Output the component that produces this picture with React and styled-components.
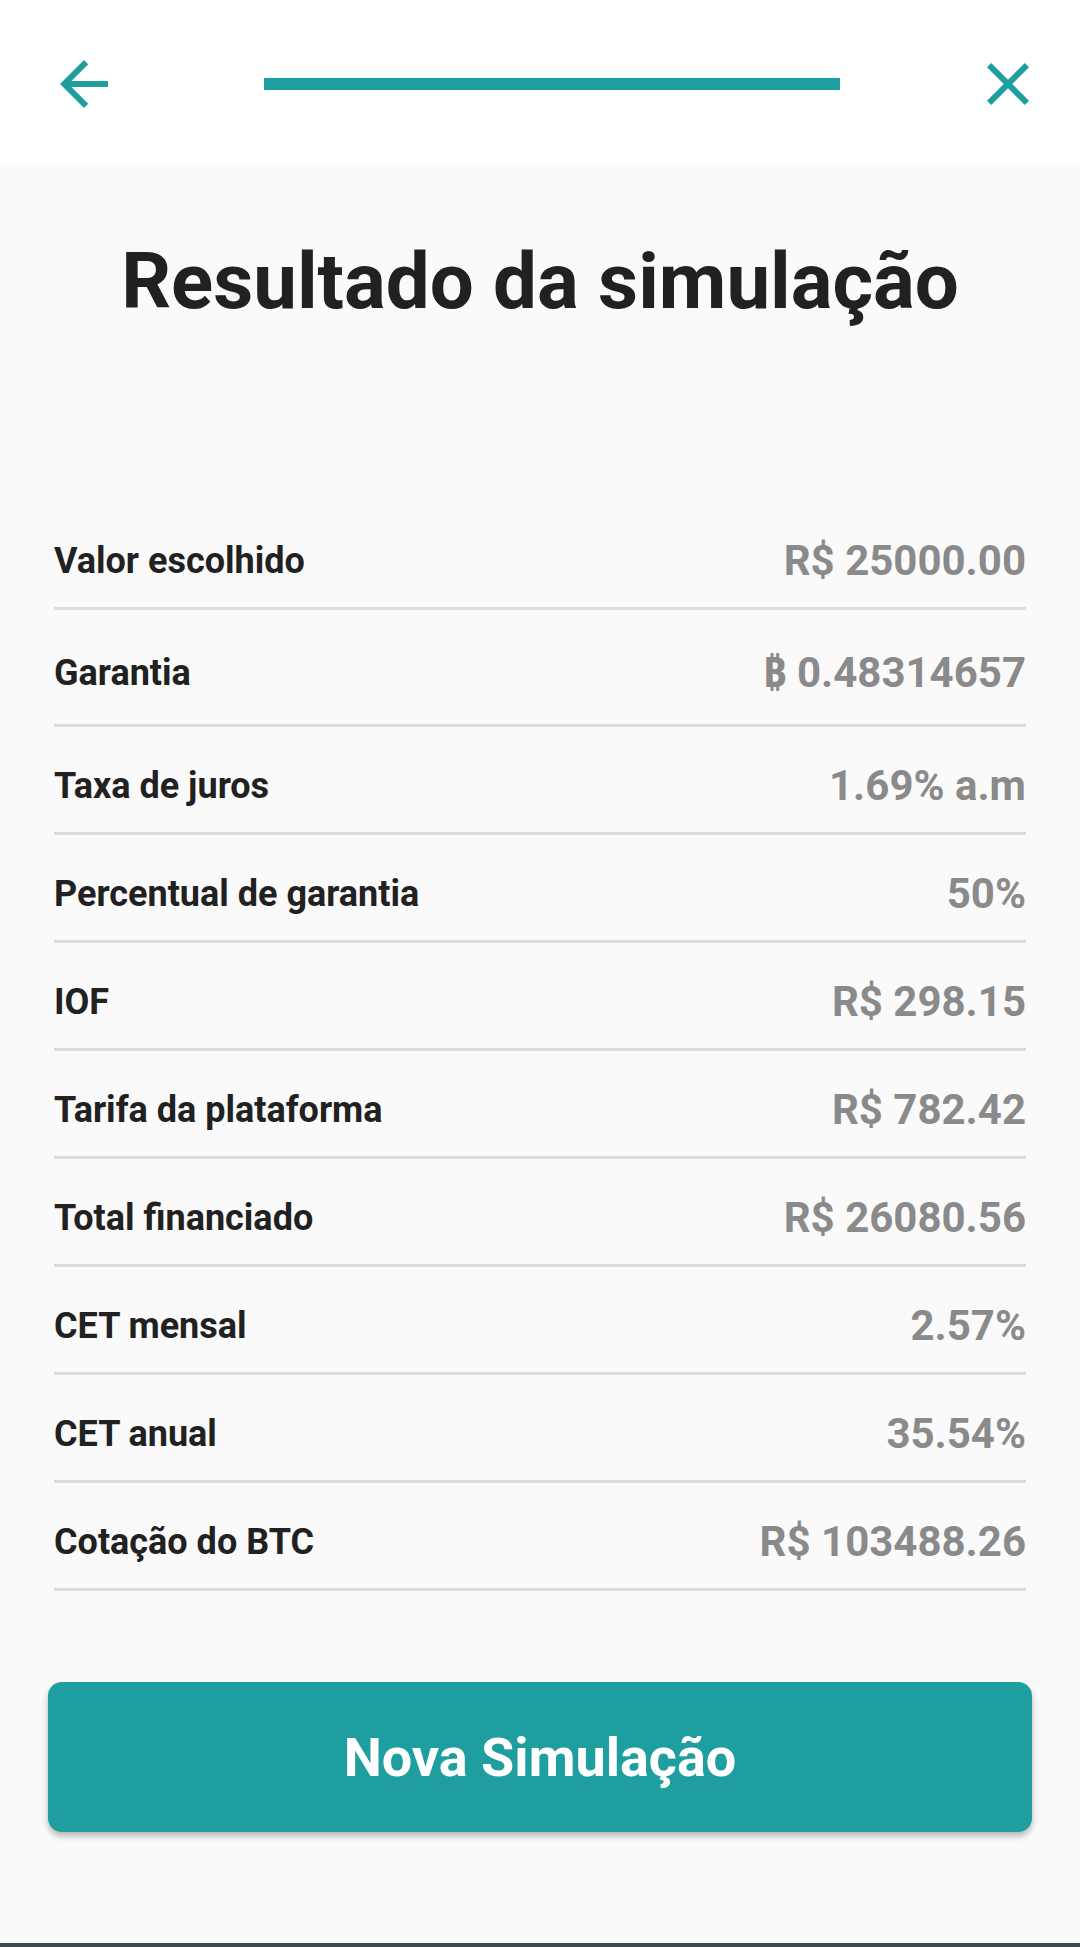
import React from "react";
import styled, { createGlobalStyle } from "styled-components";

const teal = "#1e9e9e";

const GlobalStyle = createGlobalStyle`
  html, body {
    margin: 0;
    padding: 0;
    background: #fafafa;
  }
  body {
    font-family: Roboto, "Noto Sans", "DejaVu Sans", sans-serif;
  }
`;

const Page = styled.div`
  min-height: 1947px;
  display: flex;
  flex-direction: column;
  background: #fafafa;
`;

const Header = styled.header`
  height: 167px;
  background: #fff;
  display: flex;
  align-items: center;
  padding: 0 36px 0 48px;
  box-sizing: border-box;
`;

const IconButton = styled.button`
  width: 72px;
  height: 72px;
  padding: 0;
  border: none;
  background: transparent;
  color: ${teal};
  display: flex;
  align-items: center;
  justify-content: center;
  flex: none;
`;

const Icon = styled.svg`
  width: 72px;
  height: 72px;
  display: block;
`;

const Progress = styled.div`
  width: 576px;
  height: 12px;
  background: ${teal};
  margin-left: 144px;
  margin-right: auto;
`;

const Title = styled.h1`
  margin: 70px 0 175px;
  font-size: 78px;
  line-height: 90px;
  font-weight: 700;
  color: #212121;
  text-align: center;
`;

const List = styled.dl`
  margin: 0 54px;
  padding: 0;
`;

const Row = styled.div`
  display: flex;
  align-items: center;
  justify-content: space-between;
  padding: ${(p) => (p.tall ? "39px 0 27px" : "35px 0 22px")};
  border-bottom: 3px solid #dcdcdc;
`;

const Label = styled.dt`
  margin: 0;
  font-size: 36px;
  line-height: 48px;
  font-weight: 700;
  color: #212121;
`;

const Value = styled.dd`
  margin: 0;
  font-size: 42px;
  line-height: 48px;
  font-weight: 700;
  color: #8a8a8a;
`;

const PrimaryButton = styled.button`
  margin: 91px 48px 0 48px;
  height: 150px;
  border: none;
  border-radius: 14px;
  background: ${teal};
  color: #fff;
  font-family: inherit;
  font-size: 54px;
  font-weight: 700;
  box-shadow: 0 4px 6px rgba(0, 0, 0, 0.28);
`;

const NavEdge = styled.div`
  margin-top: auto;
  height: 4px;
  background: #3e4a4d;
`;

const rows = [
  { label: "Valor escolhido", value: "R$ 25000.00" },
  { label: "Garantia", value: "₿ 0.48314657", tall: true },
  { label: "Taxa de juros", value: "1.69% a.m" },
  { label: "Percentual de garantia", value: "50%" },
  { label: "IOF", value: "R$ 298.15" },
  { label: "Tarifa da plataforma", value: "R$ 782.42" },
  { label: "Total financiado", value: "R$ 26080.56" },
  { label: "CET mensal", value: "2.57%" },
  { label: "CET anual", value: "35.54%" },
  { label: "Cotação do BTC", value: "R$ 103488.26" },
];

export default function App() {
  return (
    <Page>
      <GlobalStyle />
      <Header>
        <IconButton aria-label="Voltar">
          <Icon viewBox="0 0 24 24">
            <path
              fill="currentColor"
              d="M20 11H7.83l5.59-5.59L12 4l-8 8 8 8 1.41-1.41L7.83 13H20v-2z"
            />
          </Icon>
        </IconButton>
        <Progress />
        <IconButton aria-label="Fechar">
          <Icon viewBox="0 0 24 24">
            <path
              fill="currentColor"
              d="M19 6.41L17.59 5 12 10.59 6.41 5 5 6.41 10.59 12 5 17.59 6.41 19 12 13.41 17.59 19 19 17.59 13.41 12z"
            />
          </Icon>
        </IconButton>
      </Header>

      <Title>Resultado da simulação</Title>

      <List>
        {rows.map((r) => (
          <Row key={r.label} tall={r.tall}>
            <Label>{r.label}</Label>
            <Value>{r.value}</Value>
          </Row>
        ))}
      </List>

      <PrimaryButton>Nova Simulação</PrimaryButton>
      <NavEdge />
    </Page>
  );
}
